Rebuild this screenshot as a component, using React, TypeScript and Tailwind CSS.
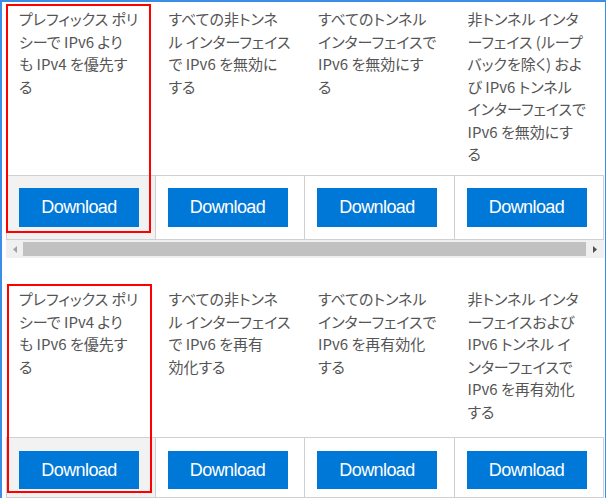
import React from 'react';

type Col = string[];

const topCols: Col[] = [
  ['プレフィックス ポリ', 'シーで IPv6 より', 'も IPv4 を優先す', 'る'],
  ['すべての非トンネ', 'ル インターフェイス', 'で IPv6 を無効に', 'する'],
  ['すべてのトンネル', 'インターフェイスで', 'IPv6 を無効にす', 'る'],
  ['非トンネル インタ', 'ーフェイス (ループ', 'バックを除く) およ', 'び IPv6 トンネル', 'インターフェイスで', 'IPv6 を無効にす', 'る'],
];

const bottomCols: Col[] = [
  ['プレフィックス ポリ', 'シーで IPv4 より', 'も IPv6 を優先す', 'る'],
  ['すべての非トンネ', 'ル インターフェイス', 'で IPv6 を再有', '効化する'],
  ['すべてのトンネル', 'インターフェイスで', 'IPv6 を再有効化', 'する'],
  ['非トンネル インタ', 'ーフェイスおよび', 'IPv6 トンネル イ', 'ンターフェイスで', 'IPv6 を再有効化', 'する'],
];

const DownloadButton: React.FC<{ className: string }> = ({ className }) => (
  <button
    className={`w-[120px] bg-[#0078d7] text-white text-[18px] tracking-[-0.6px] font-['Liberation_Sans',Arial,sans-serif] ${className}`}
  >
    Download
  </button>
);

interface TableProps {
  cols: Col[];
  bodyClass: string;
  footClass: string;
  btnClass: string;
  boxClass: string;
}

const DownloadTable: React.FC<TableProps> = ({ cols, bodyClass, footClass, btnClass, boxClass }) => (
  <div className="relative grid grid-cols-4">
    {cols.map((lines, i) => (
      <div
        key={`b${i}`}
        className={`pl-[13px] pr-[2px] text-[15px] leading-[22.5px] text-[#555] whitespace-nowrap font-['Noto_Sans_CJK_JP',sans-serif] [font-feature-settings:'palt'] ${bodyClass}`}
      >
        {lines.map((l, j) => (
          <div key={j}>{l}</div>
        ))}
      </div>
    ))}
    {cols.map((_, i) => (
      <div
        key={`f${i}`}
        className={`border-t border-b border-r border-[#d0d0d0] pl-[12px] ${footClass} ${i === 0 ? 'border-l bg-[#f2f2f2]' : 'bg-white'}`}
      >
        <DownloadButton className={btnClass} />
      </div>
    ))}
    <div className={`absolute top-0 w-[145px] border-2 border-[#ff0000] pointer-events-none ${boxClass}`} />
  </div>
);

const ScrollBar: React.FC = () => (
  <div className="flex h-[18px] bg-[#f0f0f0]">
    <div className="w-[17px] flex items-center justify-center">
      <svg width="4" height="7" viewBox="0 0 4 7">
        <polygon points="4,0 0,3.5 4,7" fill="#a3a3a3" />
      </svg>
    </div>
    <div className="flex-1 my-[2px] bg-[#c1c1c1]" />
    <div className="w-[18px] flex items-center justify-center">
      <svg width="4" height="7" viewBox="0 0 4 7">
        <polygon points="0,0 4,3.5 0,7" fill="#505050" />
      </svg>
    </div>
  </div>
);

export default function App() {
  return (
    <div className="w-[606px] h-[498px] overflow-hidden bg-white border-l-2 border-t-2 border-r border-[#3b8de8] pl-[4px] pr-[1px] pt-[2px]">
      <DownloadTable
        cols={topCols}
        bodyClass="h-[171px] pt-[4px]"
        footClass="pt-[12px] pb-[12px]"
        btnClass="h-[39px]"
        boxClass="left-0 h-[229px]"
      />
      <ScrollBar />
      <div className="mt-[26px]">
        <DownloadTable
          cols={bottomCols}
          bodyClass="h-[153px] pt-[4px]"
          footClass="pt-[13px] pb-[8px]"
          btnClass="h-[38px]"
          boxClass="left-[1px] h-[209px]"
        />
      </div>
    </div>
  );
}
